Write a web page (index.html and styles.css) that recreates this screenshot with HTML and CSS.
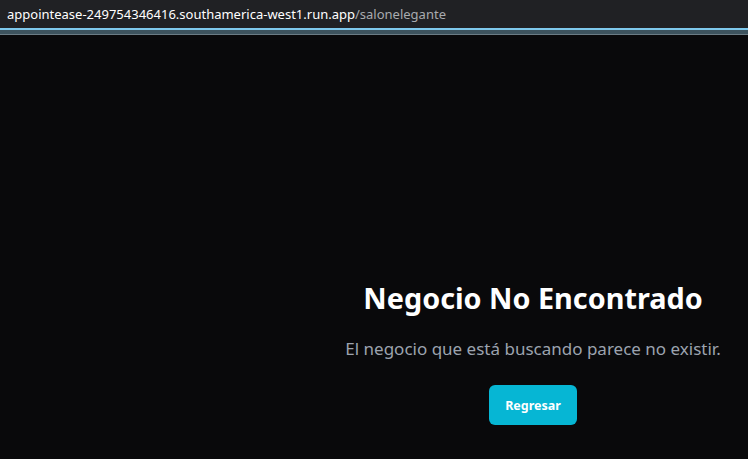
FILE: index.html
```html
<!DOCTYPE html>
<html lang="es">
<head>
<meta charset="utf-8">
<title>AppointEase</title>
<link rel="stylesheet" href="styles.css">
</head>
<body>
<div class="urlbar">
  <span class="host">appointease-249754346416.southamerica-west1.run.app</span><span class="path">/salonelegante</span>
</div>
<div class="progress"></div>
<div class="strip"></div>
<main class="page">
  <section class="notfound">
    <h1 class="title">Negocio No Encontrado</h1>
    <p class="message">El negocio que está buscando parece no existir.</p>
    <button class="back" type="button">Regresar</button>
  </section>
</main>
</body>
</html>
```
FILE: styles.css
```css
* { box-sizing: border-box; }
html, body { margin: 0; padding: 0; height: 100%; }
body {
  background: #09090b;
  font-family: "Noto Sans", "Open Sans", sans-serif;
  overflow: hidden;
}
.urlbar {
  height: 28px;
  background: #202124;
  padding: 4px 0 0 7px;
  font-size: 13px;
  line-height: 20px;
  white-space: nowrap;
}
.host { color: #ffffff; }
.path { color: #a8abaf; }
.progress { height: 2px; background: #7ec8ec; }
.strip { height: 5px; background: #3d535e; border-bottom: 1px solid #6b7c85; }
.page {
  height: calc(100% - 36px);
  background: #09090b;
  padding-left: 318px;
  padding-top: 245px;
}
.notfound {
  display: flex;
  flex-direction: column;
  align-items: center;
  text-align: center;
}
.title {
  margin: 0 0 19px;
  font-size: 28.8px;
  line-height: 36px;
  font-weight: 700;
  color: #ffffff;
}
.message {
  margin: 0 0 22px;
  font-size: 17px;
  line-height: 28px;
  color: #9ca3af;
}
.back {
  height: 40px;
  padding: 0 16px;
  border: 0;
  border-radius: 6px;
  background: #06b6d4;
  color: #ffffff;
  font-family: inherit;
  font-size: 12.5px;
  font-weight: 700;
}
```
